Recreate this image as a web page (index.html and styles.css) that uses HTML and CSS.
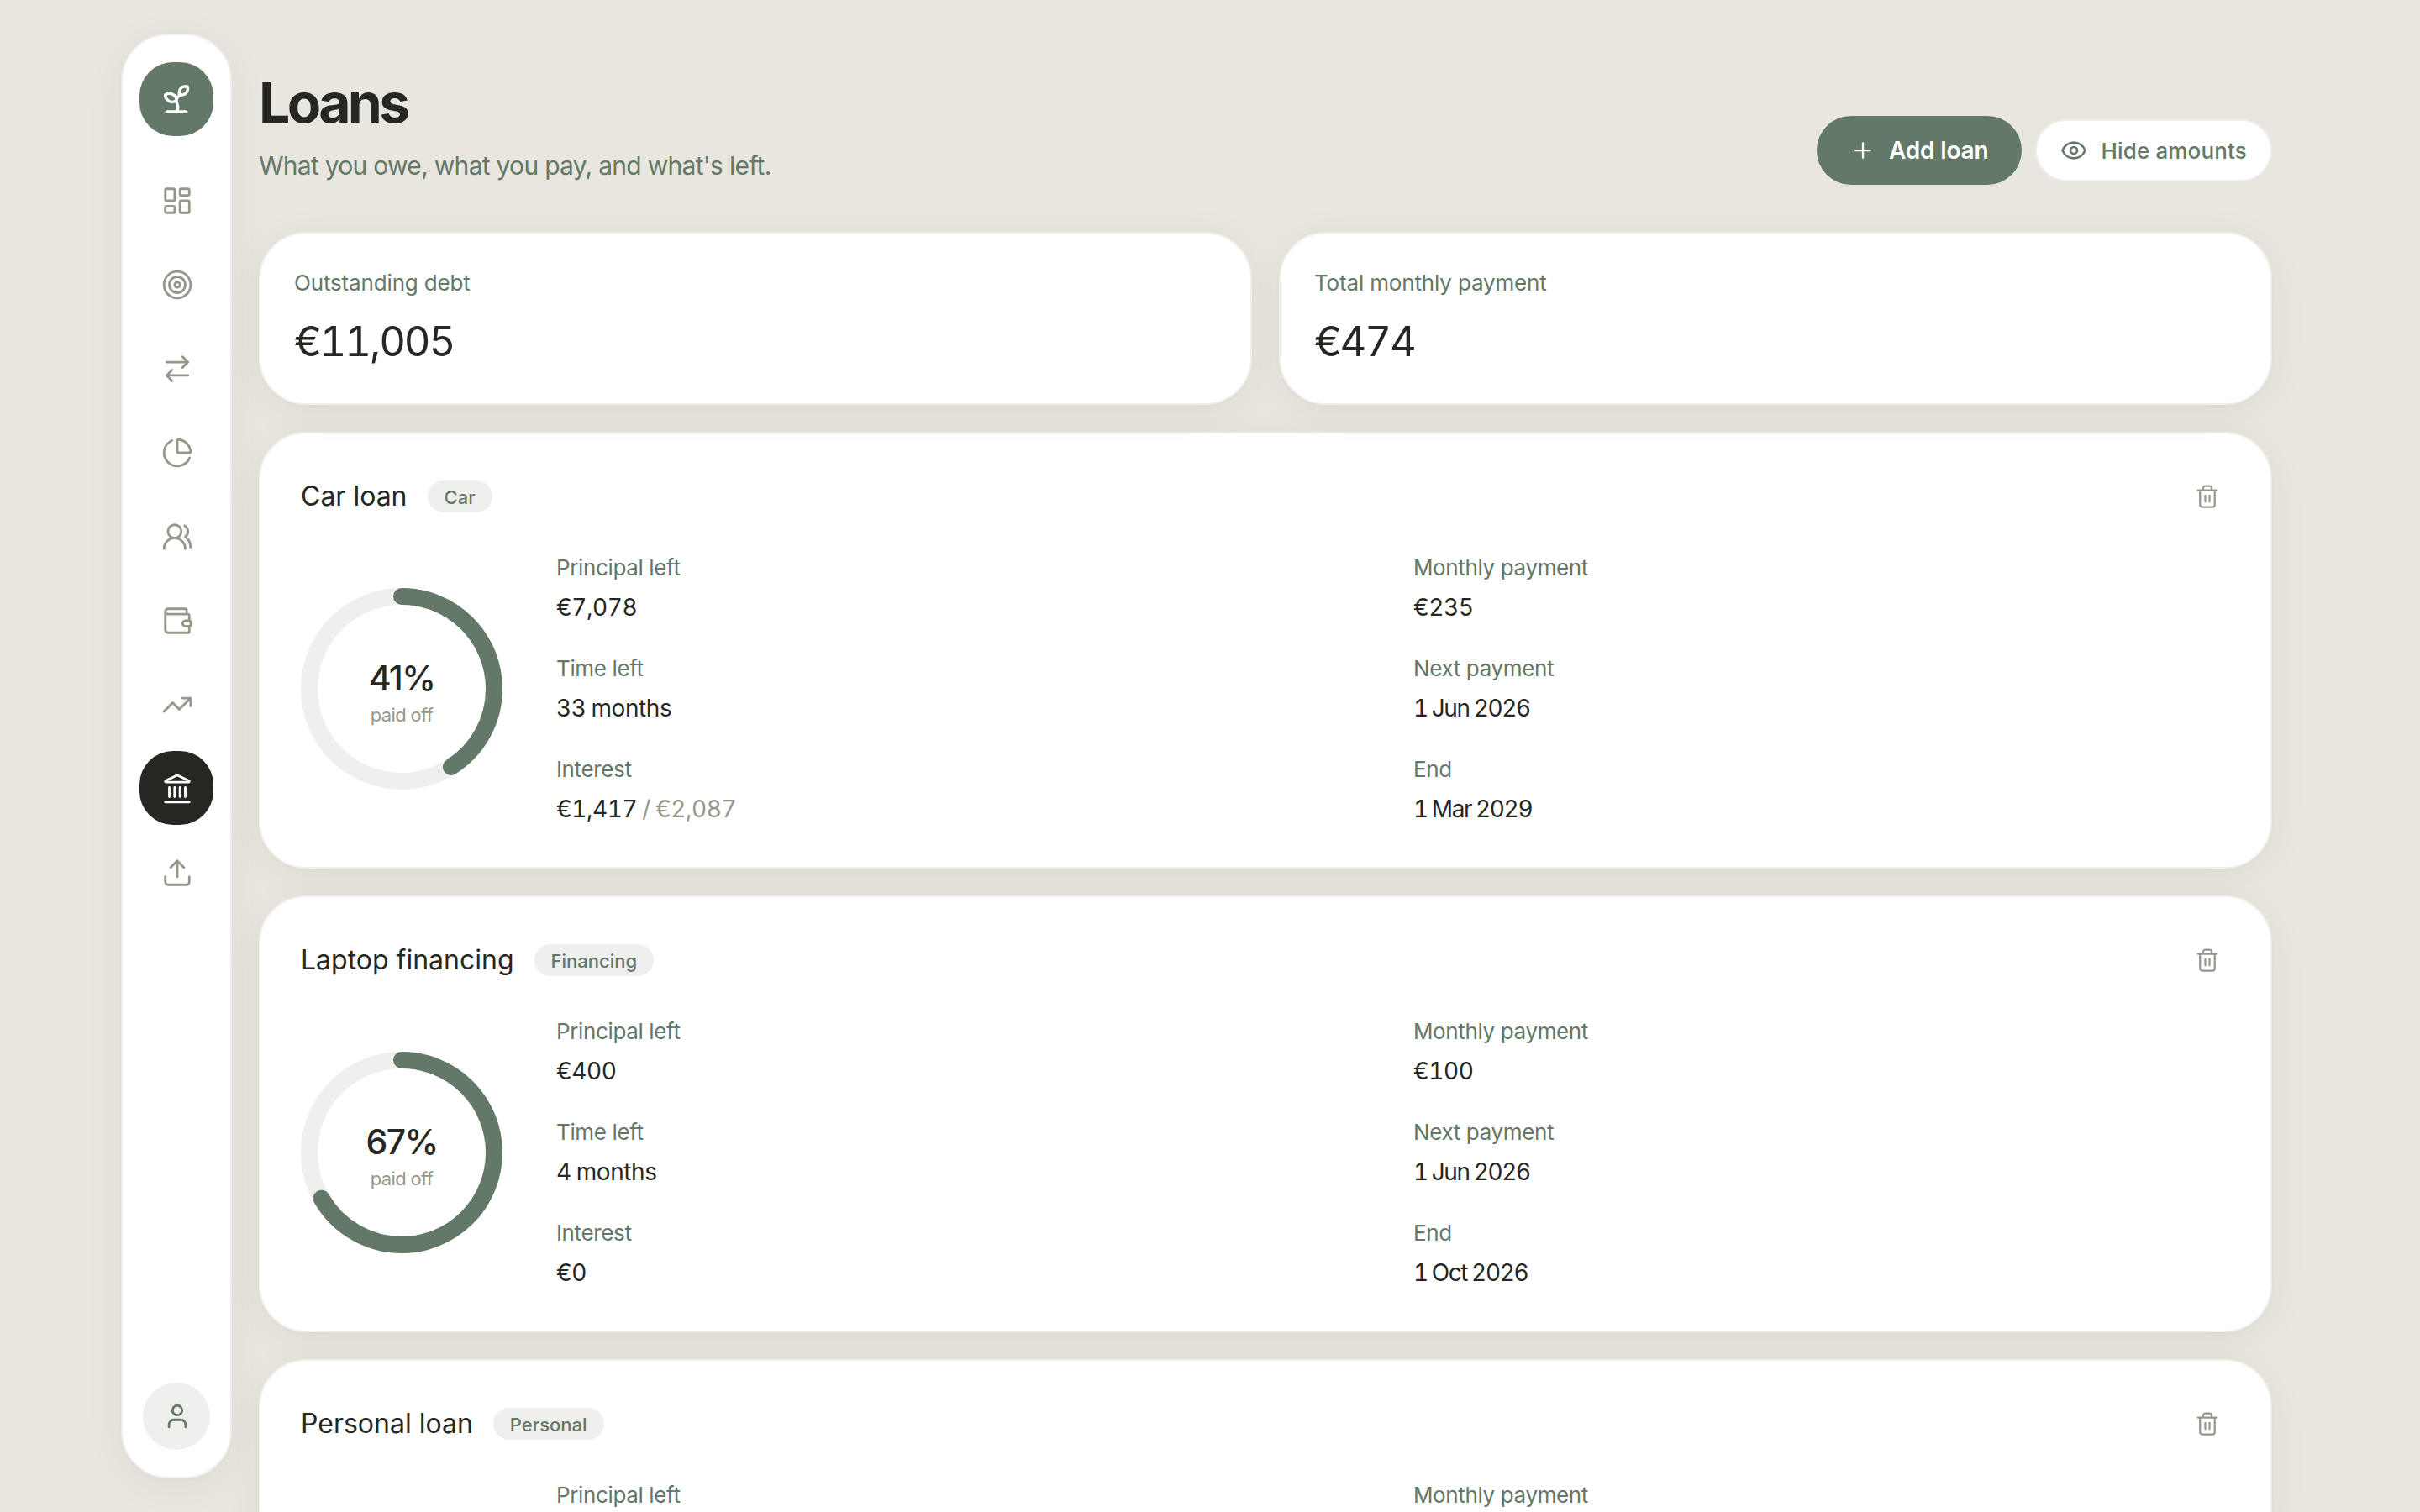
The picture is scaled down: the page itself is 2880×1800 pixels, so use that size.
FILE: index.html
```html
<!DOCTYPE html>
<html lang="en">
<head>
  <meta charset="UTF-8">
  <title>Loans</title>
  <link rel="stylesheet" href="styles.css">
</head>
<body>

  <!-- Shared icons -->
  <svg class="sprite" aria-hidden="true">
    <symbol id="icon-trash" viewBox="0 0 24 24">
      <path d="M10 11v6M14 11v6M19 6v14a2 2 0 0 1-2 2H7a2 2 0 0 1-2-2V6M3 6h18M8 6V4a2 2 0 0 1 2-2h4a2 2 0 0 1 2 2v2" />
    </symbol>
  </svg>

  <div class="layout">
    <nav class="sidebar">
      <a class="logo" href="#">
        <svg class="icon" viewBox="0 0 24 24"><path d="M14 9.536V7a4 4 0 0 1 4-4h1.5a.5.5 0 0 1 .5.5V5a4 4 0 0 1-4 4 4 4 0 0 0-4 4c0 2 1 3 1 5a5 5 0 0 1-1 3M4 9a5 5 0 0 1 8 4 5 5 0 0 1-8-4M5 21h14" /></svg>
      </a>
      <div class="nav">
        <a class="nav-item" href="#">
          <svg class="icon" viewBox="0 0 24 24"><rect x="3" y="3" width="7" height="9" rx="1" /><rect x="14" y="3" width="7" height="5" rx="1" /><rect x="14" y="12" width="7" height="9" rx="1" /><rect x="3" y="16" width="7" height="5" rx="1" /></svg>
        </a>
        <a class="nav-item" href="#">
          <svg class="icon" viewBox="0 0 24 24"><circle cx="12" cy="12" r="10" /><circle cx="12" cy="12" r="6" /><circle cx="12" cy="12" r="2" /></svg>
        </a>
        <a class="nav-item" href="#">
          <svg class="icon" viewBox="0 0 24 24"><path d="m16 3 4 4-4 4M20 7H4M8 21l-4-4 4-4M4 17h16" /></svg>
        </a>
        <a class="nav-item" href="#">
          <svg class="icon" viewBox="0 0 24 24"><path d="M21 12c.552 0 1.005-.449.95-.998a10 10 0 0 0-8.953-8.951c-.55-.055-.998.398-.998.95v8a1 1 0 0 0 1 1zM21.21 15.89A10 10 0 1 1 8 2.83" /></svg>
        </a>
        <a class="nav-item" href="#">
          <svg class="icon" viewBox="0 0 24 24"><path d="M18 21a8 8 0 0 0-16 0" /><circle cx="10" cy="8" r="5" /><path d="M22 20c0-3.37-2-6.5-4-8a5 5 0 0 0-.45-8.3" /></svg>
        </a>
        <a class="nav-item" href="#">
          <svg class="icon" viewBox="0 0 24 24"><path d="M19 7V4a1 1 0 0 0-1-1H5a2 2 0 0 0 0 4h15a1 1 0 0 1 1 1v4h-3a2 2 0 0 0 0 4h3a1 1 0 0 0 1-1v-2a1 1 0 0 0-1-1M3 5v14a2 2 0 0 0 2 2h15a1 1 0 0 0 1-1v-4" /></svg>
        </a>
        <a class="nav-item" href="#">
          <svg class="icon" viewBox="0 0 24 24"><path d="M16 7h6v6M22 7l-8.5 8.5-5-5L2 17" /></svg>
        </a>
        <a class="nav-item active" href="#">
          <svg class="icon" viewBox="0 0 24 24"><path d="M10 18v-7M11.12 2.198a2 2 0 0 1 1.76.006l7.866 3.847c.476.233.31.949-.22.949H3.474c-.53 0-.695-.716-.22-.949zM14 18v-7M18 18v-7M3 22h18M6 18v-7" /></svg>
        </a>
        <a class="nav-item" href="#">
          <svg class="icon" viewBox="0 0 24 24"><path d="M12 3v12M17 8l-5-5-5 5M21 15v4a2 2 0 0 1-2 2H5a2 2 0 0 1-2-2v-4" /></svg>
        </a>
      </div>
      <a class="avatar" href="#">
        <svg class="icon" viewBox="0 0 24 24"><path d="M19 21v-2a4 4 0 0 0-4-4H9a4 4 0 0 0-4 4v2" /><circle cx="12" cy="7" r="4" /></svg>
      </a>
    </nav>

    <main class="main">
      <header class="header">
        <div>
          <h1>Loans</h1>
          <p class="subtitle">What you owe, what you pay, and what's left.</p>
        </div>
        <div class="actions">
          <button class="btn btn-primary">
            <svg class="icon" viewBox="0 0 24 24"><path d="M5 12h14M12 5v14" /></svg>
            <span>Add loan</span>
          </button>
          <button class="btn btn-light">
            <svg class="icon" viewBox="0 0 24 24"><path d="M2.062 12.348a1 1 0 0 1 0-.696 10.75 10.75 0 0 1 19.876 0 1 1 0 0 1 0 .696 10.75 10.75 0 0 1-19.876 0" /><circle cx="12" cy="12" r="3" /></svg>
            <span>Hide amounts</span>
          </button>
        </div>
      </header>

      <section class="summary">
        <div class="card stat">
          <div class="stat-label">Outstanding debt</div>
          <div class="stat-value">€11,005</div>
        </div>
        <div class="card stat">
          <div class="stat-label">Total monthly payment</div>
          <div class="stat-value">€474</div>
        </div>
      </section>

      <section class="card loan">
        <div class="loan-head">
          <h2>Car loan</h2>
          <span class="badge">Car</span>
          <button class="delete"><svg class="icon"><use href="#icon-trash" /></svg></button>
        </div>
        <div class="loan-body">
          <div class="ring">
            <svg viewBox="0 0 240 240">
              <circle class="ring-track" cx="120" cy="120" r="110" />
              <circle class="ring-value" cx="120" cy="120" r="110" pathLength="100" style="stroke-dasharray: 41 100" />
            </svg>
            <div class="ring-text">
              <div class="percent">41%</div>
              <div class="paid">paid off</div>
            </div>
          </div>
          <dl class="facts">
            <div><dt>Principal left</dt><dd>€7,078</dd></div>
            <div><dt>Monthly payment</dt><dd>€235</dd></div>
            <div><dt>Time left</dt><dd>33 months</dd></div>
            <div><dt>Next payment</dt><dd class="date">1 Jun 2026</dd></div>
            <div><dt>Interest</dt><dd>€1,417 <span class="muted">/ €2,087</span></dd></div>
            <div><dt>End</dt><dd class="date">1 Mar 2029</dd></div>
          </dl>
        </div>
      </section>

      <section class="card loan">
        <div class="loan-head">
          <h2>Laptop financing</h2>
          <span class="badge">Financing</span>
          <button class="delete"><svg class="icon"><use href="#icon-trash" /></svg></button>
        </div>
        <div class="loan-body">
          <div class="ring">
            <svg viewBox="0 0 240 240">
              <circle class="ring-track" cx="120" cy="120" r="110" />
              <circle class="ring-value" cx="120" cy="120" r="110" pathLength="100" style="stroke-dasharray: 66.7 100" />
            </svg>
            <div class="ring-text">
              <div class="percent">67%</div>
              <div class="paid">paid off</div>
            </div>
          </div>
          <dl class="facts">
            <div><dt>Principal left</dt><dd>€400</dd></div>
            <div><dt>Monthly payment</dt><dd>€100</dd></div>
            <div><dt>Time left</dt><dd>4 months</dd></div>
            <div><dt>Next payment</dt><dd class="date">1 Jun 2026</dd></div>
            <div><dt>Interest</dt><dd>€0</dd></div>
            <div><dt>End</dt><dd class="date">1 Oct 2026</dd></div>
          </dl>
        </div>
      </section>

      <section class="card loan">
        <div class="loan-head">
          <h2>Personal loan</h2>
          <span class="badge">Personal</span>
          <button class="delete"><svg class="icon"><use href="#icon-trash" /></svg></button>
        </div>
        <div class="loan-body">
          <div class="ring"></div>
          <dl class="facts">
            <div><dt>Principal left</dt></div>
            <div><dt>Monthly payment</dt></div>
          </dl>
        </div>
      </section>
    </main>
  </div>

</body>
</html>
```
FILE: styles.css
```css
* {
  box-sizing: border-box;
}
body {
  margin: 0;
  height: 100vh;
  overflow: hidden;
  font-family: Inter, "Open Sans", sans-serif;
  background: #e8e6de;
  color: #262722;
}
h1, h2, p, dl, dd {
  margin: 0;
}
button {
  font-family: inherit;
  border: none;
  cursor: pointer;
}
.sprite {
  display: none;
}
.icon {
  width: 38px;
  height: 38px;
  fill: none;
  stroke: currentColor;
  stroke-width: 1.8;
  stroke-linecap: round;
  stroke-linejoin: round;
}
.layout {
  display: flex;
  align-items: flex-start;
  gap: 32px;
  padding: 40px 176px 0 144px;
}

/* Sidebar */
.sidebar {
  display: flex;
  flex-direction: column;
  align-items: center;
  flex-shrink: 0;
  width: 132px;
  height: calc(100vh - 80px);
  padding: 32px 20px;
  background: #fff;
  border: 2px solid #efefed;
  border-radius: 56px;
  box-shadow: 0 2px 4px rgba(38, 39, 34, 0.02), 0 8px 48px rgba(60, 56, 34, 0.06);
}
.logo, .nav-item, .avatar {
  display: flex;
  align-items: center;
  justify-content: center;
  width: 88px;
  height: 88px;
  border-radius: 40px;
  color: #98978c;
}
.logo {
  background: #647868;
  color: #fff;
  margin-bottom: 32px;
}
.logo .icon {
  width: 40px;
  height: 40px;
  stroke-width: 2.1;
}
.nav {
  display: flex;
  flex-direction: column;
  gap: 12px;
}
.nav-item {
  padding: 2px 0 0 2px;
}
.nav-item.active {
  background: #262722;
  color: #fff;
}
.avatar {
  width: 80px;
  height: 80px;
  margin-top: auto;
  padding-left: 2px;
  border-radius: 50%;
  background: #efefed;
  color: #647868;
}
.avatar .icon {
  width: 34px;
  height: 34px;
  stroke-width: 2;
}

/* Header */
.main {
  flex: 1;
  display: flex;
  flex-direction: column;
  gap: 32px;
  padding-top: 42px;
}
.header {
  display: flex;
  justify-content: space-between;
  align-items: flex-end;
  margin-bottom: 24px;
}
h1 {
  font-size: 66px;
  line-height: 80px;
  font-weight: 700;
  letter-spacing: -0.055em;
}
.subtitle {
  margin-top: 12px;
  font-size: 30px;
  line-height: 46px;
  font-weight: 375;
  letter-spacing: -0.024em;
  color: #647868;
}
.actions {
  display: flex;
  align-items: center;
  gap: 16px;
}
.btn {
  display: flex;
  align-items: center;
  border-radius: 999px;
}
.btn-primary {
  height: 82px;
  padding: 0 40px;
  gap: 16px;
  background: #647868;
  color: #fff;
  font-size: 28px;
  font-weight: 600;
  letter-spacing: -0.006em;
}
.btn-primary .icon {
  width: 30px;
  height: 30px;
}
.btn-light {
  height: 74px;
  padding: 0 28px;
  gap: 16px;
  background: #fff;
  border: 2px solid #efefed;
  color: #647868;
  font-size: 26px;
  font-weight: 500;
  letter-spacing: 0.006em;
}
.btn-light .icon {
  width: 32px;
  height: 32px;
  stroke-width: 2;
}

/* Cards */
.card {
  background: #fff;
  border: 2px solid #efefed;
  border-radius: 56px;
  box-shadow: 0 2px 4px rgba(38, 39, 34, 0.02), 0 8px 48px rgba(60, 56, 34, 0.06);
}
.summary {
  position: relative;
  display: grid;
  grid-template-columns: 1fr 1fr;
  gap: 32px;
}
.stat {
  padding: 40px;
}
.stat-label {
  font-size: 26px;
  line-height: 37px;
  letter-spacing: -0.006em;
  color: #647868;
}
.stat-value {
  margin-top: 18px;
  font-size: 49px;
  line-height: 67px;
  font-weight: 430;
  letter-spacing: -0.042em;
  font-feature-settings: "tnum";
}
.loan {
  padding: 48px;
}
.loan-head {
  display: flex;
  align-items: center;
  height: 54px;
  margin-bottom: 38px;
}
h2 {
  padding-bottom: 1px;
  font-size: 32px;
  font-weight: 420;
  letter-spacing: 0;
}
.badge {
  margin-left: 24px;
  padding: 2px 20px 0;
  border-radius: 999px;
  background: #efefed;
  color: #647868;
  font-size: 22px;
  line-height: 36px;
  font-weight: 500;
}
.delete {
  display: flex;
  align-items: center;
  justify-content: center;
  width: 54px;
  height: 54px;
  margin-left: auto;
  padding: 0;
  background: none;
  color: #98978c;
}
.delete .icon {
  width: 30px;
  height: 30px;
}
.loan-body {
  display: flex;
  align-items: center;
  gap: 64px;
}
.ring {
  display: grid;
  flex-shrink: 0;
  width: 240px;
}
.ring svg, .ring-text {
  grid-area: 1 / 1;
}
.ring svg {
  width: 240px;
  height: 240px;
  transform: rotate(-90deg);
}
.ring circle {
  fill: none;
  stroke-width: 20;
}
.ring-track {
  stroke: #efefed;
}
.ring-value {
  stroke: #647868;
  stroke-linecap: round;
}
.ring-text {
  align-self: center;
  text-align: center;
}
.percent {
  font-size: 41px;
  line-height: 61px;
  font-weight: 450;
  letter-spacing: -0.04em;
}
.paid {
  font-size: 22px;
  line-height: 26px;
  letter-spacing: -0.03em;
  color: #98978c;
}
.facts {
  flex: 1;
  display: grid;
  grid-template-columns: 1fr 1fr;
  gap: 32px 48px;
}
.facts dt {
  font-size: 26px;
  line-height: 40px;
  letter-spacing: -0.014em;
  color: #647868;
}
.facts dd {
  margin-top: 7px;
  font-size: 28px;
  line-height: 41px;
  font-weight: 380;
  letter-spacing: -0.015em;
  word-spacing: -0.04em;
  font-feature-settings: "tnum";
}
.facts dd.date {
  letter-spacing: -0.05em;
}
.muted {
  color: #98978c;
}
```
